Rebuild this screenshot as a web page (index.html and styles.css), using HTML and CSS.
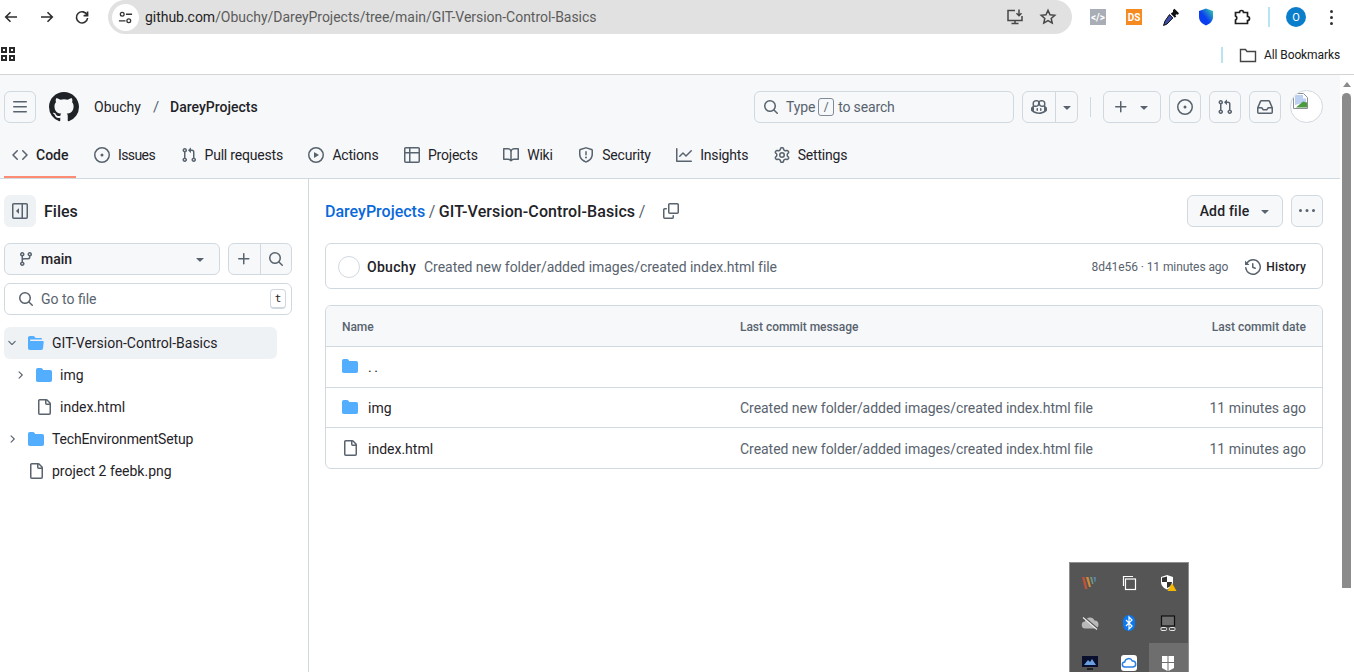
FILE: index.html
```html
<!DOCTYPE html>
<html lang="en">
<head>
<meta charset="utf-8">
<title>DareyProjects/GIT-Version-Control-Basics</title>
<link rel="stylesheet" href="styles.css">
</head>
<body>
<svg class="sprite" width="0" height="0" aria-hidden="true">
  <defs>
    <linearGradient id="shield-grad" x1="0" y1="1" x2="1" y2="0"><stop offset="0.45" stop-color="#0a3ff0"/><stop offset="1" stop-color="#35d6a6"/></linearGradient>
    <symbol id="bars" viewBox="0 0 16 16"><path d="M1 2.75A.75.75 0 0 1 1.75 2h12.5a.75.75 0 0 1 0 1.5H1.75A.75.75 0 0 1 1 2.75Zm0 5A.75.75 0 0 1 1.75 7h12.5a.75.75 0 0 1 0 1.5H1.75A.75.75 0 0 1 1 7.75ZM1.75 12h12.5a.75.75 0 0 1 0 1.5H1.75a.75.75 0 0 1 0-1.5Z"/></symbol>
    <symbol id="mark" viewBox="0 0 16 16"><path d="M8 0c4.42 0 8 3.58 8 8a8.013 8.013 0 0 1-5.45 7.59c-.4.08-.55-.17-.55-.38 0-.27.01-1.13.01-2.2 0-.75-.25-1.23-.54-1.48 1.78-.2 3.65-.88 3.65-3.95 0-.88-.31-1.59-.82-2.15.08-.2.36-1.02-.08-2.12 0 0-.67-.22-2.2.82-.64-.18-1.32-.27-2-.27-.68 0-1.36.09-2 .27-1.53-1.03-2.2-.82-2.2-.82-.44 1.1-.16 1.92-.08 2.12-.51.56-.82 1.28-.82 2.15 0 3.06 1.86 3.75 3.64 3.95-.23.2-.44.55-.51 1.07-.46.21-1.61.55-2.33-.66-.15-.24-.6-.83-1.23-.82-.67.01-.27.38.01.53.34.19.73.9.82 1.13.16.45.68 1.31 2.69.94 0 .67.01 1.3.01 1.49 0 .21-.15.45-.55.38A7.995 7.995 0 0 1 0 8c0-4.42 3.58-8 8-8Z"/></symbol>
    <symbol id="code" viewBox="0 0 16 16"><path d="m11.28 3.22 4.25 4.25a.75.75 0 0 1 0 1.06l-4.25 4.25a.749.749 0 0 1-1.275-.326.749.749 0 0 1 .215-.734L13.94 8l-3.72-3.72a.749.749 0 0 1 .326-1.275.749.749 0 0 1 .734.215Zm-6.56 0a.751.751 0 0 1 1.042.018.751.751 0 0 1 .018 1.042L2.06 8l3.72 3.72a.749.749 0 0 1-.326 1.275.749.749 0 0 1-.734-.215L.47 8.53a.75.75 0 0 1 0-1.06Z"/></symbol>
    <symbol id="issue" viewBox="0 0 16 16"><path d="M8 9.5a1.5 1.5 0 1 0 0-3 1.5 1.5 0 0 0 0 3Z"/><path d="M8 0a8 8 0 1 1 0 16A8 8 0 0 1 8 0ZM1.5 8a6.5 6.5 0 1 0 13 0 6.5 6.5 0 0 0-13 0Z"/></symbol>
    <symbol id="pr" viewBox="0 0 16 16"><path d="M1.5 3.25a2.25 2.25 0 1 1 3 2.122v5.256a2.251 2.251 0 1 1-1.5 0V5.372A2.25 2.25 0 0 1 1.5 3.25Zm5.677-.177L9.573.677A.25.25 0 0 1 10 .854V2.5h1A2.5 2.5 0 0 1 13.5 5v5.628a2.251 2.251 0 1 1-1.5 0V5a1 1 0 0 0-1-1h-1v1.646a.25.25 0 0 1-.427.177L7.177 3.427a.25.25 0 0 1 0-.354ZM3.75 2.5a.75.75 0 1 0 0 1.5.75.75 0 0 0 0-1.5Zm0 9.5a.75.75 0 1 0 0 1.5.75.75 0 0 0 0-1.5Zm8.25.75a.75.75 0 1 0 1.5 0 .75.75 0 0 0-1.5 0Z"/></symbol>
    <symbol id="play" viewBox="0 0 16 16"><path d="M8 0a8 8 0 1 1 0 16A8 8 0 0 1 8 0ZM1.5 8a6.5 6.5 0 1 0 13 0 6.5 6.5 0 0 0-13 0Zm4.879-2.773 4.264 2.559a.25.25 0 0 1 0 .428l-4.264 2.559A.25.25 0 0 1 6 10.559V5.442a.25.25 0 0 1 .379-.215Z"/></symbol>
    <symbol id="table" viewBox="0 0 16 16"><path d="M0 1.75C0 .784.784 0 1.75 0h12.5C15.216 0 16 .784 16 1.75v12.5A1.75 1.75 0 0 1 14.25 16H1.75A1.75 1.75 0 0 1 0 14.25ZM6.5 6.5v8h7.75a.25.25 0 0 0 .25-.25V6.5Zm8-1.5V1.75a.25.25 0 0 0-.25-.25H6.5V5Zm-13 1.5v7.75c0 .138.112.25.25.25H5v-8ZM5 5V1.5H1.75a.25.25 0 0 0-.25.25V5Z"/></symbol>
    <symbol id="book" viewBox="0 0 16 16"><path d="M0 1.75A.75.75 0 0 1 .75 1h4.253c1.227 0 2.317.59 3 1.501A3.743 3.743 0 0 1 11.006 1h4.245a.75.75 0 0 1 .75.75v10.5a.75.75 0 0 1-.75.75h-4.507a2.25 2.25 0 0 0-1.591.659l-.622.621a.75.75 0 0 1-1.06 0l-.622-.621A2.25 2.25 0 0 0 5.258 13H.75a.75.75 0 0 1-.75-.75Zm7.251 10.324.004-5.073-.002-2.253A2.25 2.25 0 0 0 5.003 2.5H1.5v9h3.757a3.75 3.75 0 0 1 1.994.574ZM8.755 4.75l-.004 7.322a3.752 3.752 0 0 1 1.992-.572H14.5v-9h-3.495a2.25 2.25 0 0 0-2.25 2.25Z"/></symbol>
    <symbol id="shield" viewBox="0 0 16 16"><path d="M7.467.133a1.748 1.748 0 0 1 1.066 0l5.25 1.68A1.75 1.75 0 0 1 15 3.48V7c0 1.566-.32 3.182-1.303 4.682-.983 1.498-2.585 2.813-5.032 3.855a1.697 1.697 0 0 1-1.33 0c-2.447-1.042-4.049-2.357-5.032-3.855C1.32 10.182 1 8.566 1 7V3.48a1.75 1.75 0 0 1 1.217-1.667Zm.61 1.429a.25.25 0 0 0-.153 0l-5.25 1.68a.25.25 0 0 0-.174.238V7c0 1.358.275 2.666 1.057 3.86.784 1.194 2.121 2.34 4.366 3.297a.196.196 0 0 0 .154 0c2.245-.956 3.582-2.104 4.366-3.298C13.225 9.666 13.5 8.36 13.5 7V3.48a.251.251 0 0 0-.174-.237l-5.25-1.68ZM8.75 4.75v3a.75.75 0 0 1-1.5 0v-3a.75.75 0 0 1 1.5 0ZM9 10.5a1 1 0 1 1-2 0 1 1 0 0 1 2 0Z"/></symbol>
    <symbol id="graph" viewBox="0 0 16 16"><path d="M1.5 1.75V13.5h13.75a.75.75 0 0 1 0 1.5H.75a.75.75 0 0 1-.75-.75V1.75a.75.75 0 0 1 1.5 0Zm14.28 2.53-5.25 5.25a.75.75 0 0 1-1.06 0L7 7.06 4.28 9.78a.751.751 0 0 1-1.042-.018.751.751 0 0 1-.018-1.042l3.25-3.25a.75.75 0 0 1 1.06 0L10 7.94l4.72-4.72a.751.751 0 0 1 1.042.018.751.751 0 0 1 .018 1.042Z"/></symbol>
    <symbol id="gear" viewBox="0 0 16 16"><path d="M8 0a8.2 8.2 0 0 1 .701.031C9.444.095 9.99.645 10.16 1.29l.288 1.107c.018.066.079.158.212.224.231.114.454.243.668.386.123.082.233.09.299.071l1.103-.303c.644-.176 1.392.021 1.82.63.27.385.506.792.704 1.218.315.675.111 1.422-.364 1.891l-.814.806c-.049.048-.098.147-.088.294.016.257.016.515 0 .772-.01.147.038.246.088.294l.814.806c.475.469.679 1.216.364 1.891a7.977 7.977 0 0 1-.704 1.217c-.428.61-1.176.807-1.82.63l-1.102-.302c-.067-.019-.177-.011-.3.071a5.909 5.909 0 0 1-.668.386c-.133.066-.194.158-.211.224l-.29 1.106c-.168.646-.715 1.196-1.458 1.26a8.006 8.006 0 0 1-1.402 0c-.743-.064-1.289-.614-1.458-1.26l-.289-1.106c-.018-.066-.079-.158-.212-.224a5.738 5.738 0 0 1-.668-.386c-.123-.082-.233-.09-.299-.071l-1.103.303c-.644.176-1.392-.021-1.82-.63a8.12 8.12 0 0 1-.704-1.218c-.315-.675-.111-1.422.363-1.891l.815-.806c.05-.048.098-.147.088-.294a6.214 6.214 0 0 1 0-.772c.01-.147-.038-.246-.088-.294l-.815-.806C.635 6.045.431 5.298.746 4.623a7.92 7.92 0 0 1 .704-1.217c.428-.61 1.176-.807 1.82-.63l1.102.302c.067.019.177.011.3-.071.214-.143.437-.272.668-.386.133-.066.194-.158.211-.224l.29-1.106C6.009.645 6.556.095 7.299.03 7.53.01 7.764 0 8 0Zm-.571 1.525c-.036.003-.108.036-.137.146l-.289 1.105c-.147.561-.549.967-.998 1.189-.173.086-.34.183-.5.29-.417.278-.97.423-1.529.27l-1.103-.303c-.109-.03-.175.016-.195.045-.22.312-.412.644-.573.99-.014.031-.021.11.059.19l.815.806c.411.406.562.957.53 1.456a4.709 4.709 0 0 0 0 .582c.032.499-.119 1.05-.53 1.456l-.815.806c-.081.08-.073.159-.059.19.162.346.353.677.573.989.02.03.085.076.195.046l1.102-.303c.56-.153 1.113-.008 1.53.27.161.107.328.204.501.29.447.222.85.629.997 1.189l.289 1.105c.029.109.101.143.137.146a6.6 6.6 0 0 0 1.142 0c.036-.003.108-.036.137-.146l.289-1.105c.147-.561.549-.967.998-1.189.173-.086.34-.183.5-.29.417-.278.97-.423 1.529-.27l1.103.303c.109.029.175-.016.195-.045.22-.313.411-.644.573-.99.014-.031.021-.11-.059-.19l-.815-.806c-.411-.406-.562-.957-.53-1.456a4.709 4.709 0 0 0 0-.582c-.032-.499.119-1.05.53-1.456l.815-.806c.081-.08.073-.159.059-.19a6.464 6.464 0 0 0-.573-.989c-.02-.03-.085-.076-.195-.046l-1.102.303c-.56.153-1.113.008-1.53-.27a4.44 4.44 0 0 0-.501-.29c-.447-.222-.85-.629-.997-1.189l-.289-1.105c-.029-.11-.101-.143-.137-.146a6.6 6.6 0 0 0-1.142 0ZM11 8a3 3 0 1 1-6 0 3 3 0 0 1 6 0ZM9.5 8a1.5 1.5 0 1 0-3.001.001A1.5 1.5 0 0 0 9.5 8Z"/></symbol>
    <symbol id="search" viewBox="0 0 16 16"><path d="M10.68 11.74a6 6 0 0 1-7.922-8.982 6 6 0 0 1 8.982 7.922l3.04 3.04a.749.749 0 0 1-.326 1.275.749.749 0 0 1-.734-.215ZM11.5 7a4.499 4.499 0 1 0-8.997 0A4.499 4.499 0 0 0 11.5 7Z"/></symbol>
    <symbol id="plus" viewBox="0 0 16 16"><path d="M7.75 2a.75.75 0 0 1 .75.75V7h4.25a.75.75 0 0 1 0 1.5H8.5v4.25a.75.75 0 0 1-1.5 0V8.5H2.75a.75.75 0 0 1 0-1.5H7V2.75A.75.75 0 0 1 7.75 2Z"/></symbol>
    <symbol id="inbox" viewBox="0 0 16 16"><path d="M2.8 2.06A1.75 1.75 0 0 1 4.41 1h7.18c.7 0 1.333.417 1.61 1.06l2.74 6.395c.04.093.06.194.06.295v4.5A1.75 1.75 0 0 1 14.25 15H1.75A1.75 1.75 0 0 1 0 13.25v-4.5c0-.101.02-.202.06-.295Zm1.61.44a.25.25 0 0 0-.23.152L1.887 8H4.75a.75.75 0 0 1 .6.3L6.625 10h2.75l1.275-1.7a.75.75 0 0 1 .6-.3h2.863L11.82 2.652a.25.25 0 0 0-.23-.152Zm10.09 7h-2.875l-1.275 1.7a.75.75 0 0 1-.6.3h-3.5a.75.75 0 0 1-.6-.3L4.375 9.5H1.5v3.75c0 .138.112.25.25.25h12.5a.25.25 0 0 0 .25-.25Z"/></symbol>
    <symbol id="copilot" viewBox="0 0 16 16"><path d="M7.998 15.035c-4.562 0-7.873-2.914-7.998-3.749V9.338c.085-.628.677-1.686 1.588-2.065.013-.07.024-.143.036-.218.029-.183.06-.384.126-.612-.201-.508-.254-1.084-.254-1.656 0-.87.128-1.769.693-2.484.579-.733 1.494-1.124 2.724-1.261 1.206-.134 2.262.034 2.944.765.05.053.096.108.139.165.044-.057.094-.112.143-.165.682-.731 1.738-.899 2.944-.765 1.23.137 2.145.528 2.724 1.261.566.715.693 1.614.693 2.484 0 .572-.053 1.148-.254 1.656.066.228.098.429.126.612.012.076.024.148.037.218.924.385 1.522 1.471 1.591 2.095v1.872c0 .766-3.351 3.795-8.002 3.795Zm0-1.485c2.28 0 4.584-1.11 5.002-1.433V7.862l-.023-.116c-.49.21-1.075.291-1.727.291-1.146 0-2.059-.327-2.71-.991A3.222 3.222 0 0 1 8 6.303a3.24 3.24 0 0 1-.544.743c-.65.664-1.563.991-2.71.991-.652 0-1.236-.081-1.727-.291l-.023.116v4.255c.419.323 2.722 1.433 5.002 1.433ZM6.762 2.83c-.193-.206-.637-.413-1.682-.297-1.019.113-1.479.404-1.713.7-.247.312-.369.789-.369 1.554 0 .793.129 1.171.308 1.371.162.181.519.379 1.442.379.853 0 1.339-.235 1.638-.54.315-.322.527-.827.617-1.553.117-.935-.037-1.395-.241-1.614Zm4.155-.297c-1.044-.116-1.488.091-1.681.297-.204.219-.359.679-.242 1.614.091.726.303 1.231.618 1.553.299.305.784.54 1.638.54.922 0 1.28-.198 1.442-.379.179-.2.308-.578.308-1.371 0-.765-.123-1.242-.37-1.554-.233-.296-.693-.587-1.713-.7Z"/><path d="M6.25 9.037a.75.75 0 0 1 .75.75v1.501a.75.75 0 0 1-1.5 0V9.787a.75.75 0 0 1 .75-.75Zm4.25.75v1.501a.75.75 0 0 1-1.5 0V9.787a.75.75 0 0 1 1.5 0Z"/></symbol>
    <symbol id="branch" viewBox="0 0 16 16"><path d="M9.5 3.25a2.25 2.25 0 1 1 3 2.122V6A2.5 2.5 0 0 1 10 8.5H6a1 1 0 0 0-1 1v1.128a2.251 2.251 0 1 1-1.5 0V5.372a2.25 2.25 0 1 1 1.5 0v1.836A2.493 2.493 0 0 1 6 7h4a1 1 0 0 0 1-1v-.628A2.25 2.25 0 0 1 9.5 3.25Zm-6 0a.75.75 0 1 0 1.5 0 .75.75 0 0 0-1.5 0Zm8.25-.75a.75.75 0 1 0 0 1.5.75.75 0 0 0 0-1.5ZM4.25 12a.75.75 0 1 0 0 1.5.75.75 0 0 0 0-1.5Z"/></symbol>
    <symbol id="file" viewBox="0 0 16 16"><path d="M2 1.75C2 .784 2.784 0 3.75 0h6.586c.464 0 .909.184 1.237.513l2.914 2.914c.329.328.513.773.513 1.237v9.586A1.75 1.75 0 0 1 13.25 16h-9.5A1.75 1.75 0 0 1 2 14.25Zm1.75-.25a.25.25 0 0 0-.25.25v12.5c0 .138.112.25.25.25h9.5a.25.25 0 0 0 .25-.25V6h-2.75A1.75 1.75 0 0 1 9 4.25V1.5Zm6.75.062V4.25c0 .138.112.25.25.25h2.688l-.011-.013-2.914-2.914-.013-.011Z"/></symbol>
    <symbol id="folder" viewBox="0 0 16 16"><path d="M1.75 1A1.75 1.75 0 0 0 0 2.75v10.5C0 14.216.784 15 1.75 15h12.5A1.75 1.75 0 0 0 16 13.25v-8.5A1.75 1.75 0 0 0 14.25 3H7.5a.25.25 0 0 1-.2-.1l-.9-1.2C6.07 1.26 5.55 1 5 1H1.75Z"/></symbol>
    <symbol id="folder-open" viewBox="0 0 16 16"><path d="M.513 1.513A1.75 1.75 0 0 1 1.75 1h3.5c.55 0 1.07.26 1.4.7l.9 1.2a.25.25 0 0 0 .2.1H13a1 1 0 0 1 1 1v.5H2.75a.75.75 0 0 0 0 1.5h11.978a1 1 0 0 1 .994 1.117L15 13.25A1.75 1.75 0 0 1 13.25 15H1.75A1.75 1.75 0 0 1 0 13.25V2.75c0-.464.184-.91.513-1.237Z"/></symbol>
    <symbol id="chev-down" viewBox="0 0 16 16"><path d="M12.78 5.22a.749.749 0 0 1 0 1.06l-4.25 4.25a.749.749 0 0 1-1.06 0L3.22 6.28a.749.749 0 1 1 1.06-1.06L8 8.939l3.72-3.719a.749.749 0 0 1 1.06 0Z"/></symbol>
    <symbol id="chev-right" viewBox="0 0 16 16"><path d="M6.22 3.22a.75.75 0 0 1 1.06 0l4.25 4.25a.75.75 0 0 1 0 1.06l-4.25 4.25a.751.751 0 0 1-1.042-.018.751.751 0 0 1-.018-1.042L9.94 8 6.22 4.28a.75.75 0 0 1 0-1.06Z"/></symbol>
    <symbol id="caret" viewBox="0 0 16 16"><path d="m4.427 7.427 3.396 3.396a.25.25 0 0 0 .354 0l3.396-3.396A.25.25 0 0 0 11.396 7H4.604a.25.25 0 0 0-.177.427Z"/></symbol>
    <symbol id="copy" viewBox="0 0 16 16"><path d="M0 6.75C0 5.784.784 5 1.75 5h1.5a.75.75 0 0 1 0 1.5h-1.5a.25.25 0 0 0-.25.25v7.5c0 .138.112.25.25.25h7.5a.25.25 0 0 0 .25-.25v-1.5a.75.75 0 0 1 1.5 0v1.5A1.75 1.75 0 0 1 9.25 16h-7.5A1.75 1.75 0 0 1 0 14.25Z"/><path d="M5 1.75C5 .784 5.784 0 6.75 0h7.5C15.216 0 16 .784 16 1.75v7.5A1.75 1.75 0 0 1 14.25 11h-7.5A1.75 1.75 0 0 1 5 9.25Zm1.75-.25a.25.25 0 0 0-.25.25v7.5c0 .138.112.25.25.25h7.5a.25.25 0 0 0 .25-.25v-7.5a.25.25 0 0 0-.25-.25Z"/></symbol>
    <symbol id="history" viewBox="0 0 16 16"><path d="m.427 1.927 1.215 1.215a8.002 8.002 0 1 1-1.6 5.685.75.75 0 1 1 1.493-.154 6.5 6.5 0 1 0 1.18-4.458l1.358 1.358A.25.25 0 0 1 3.896 6H.25A.25.25 0 0 1 0 5.75V2.104a.25.25 0 0 1 .427-.177ZM7.75 4a.75.75 0 0 1 .75.75v2.992l2.028.812a.75.75 0 0 1-.557 1.392l-2.5-1A.751.751 0 0 1 7 8.25v-3.5A.75.75 0 0 1 7.75 4Z"/></symbol>
    <symbol id="kebab" viewBox="0 0 16 16"><path d="M8 9a1.5 1.5 0 1 0 0-3 1.5 1.5 0 0 0 0 3ZM1.5 9a1.5 1.5 0 1 0 0-3 1.5 1.5 0 0 0 0 3Zm13 0a1.5 1.5 0 1 0 0-3 1.5 1.5 0 0 0 0 3Z"/></symbol>
    <symbol id="sidebar" viewBox="0 0 16 16"><path d="M7 5.604v4.792a.25.25 0 0 1-.427.177L4.177 8.177a.25.25 0 0 1 0-.354l2.396-2.396A.25.25 0 0 1 7 5.604Z"/><path d="M1.75 0h12.5C15.216 0 16 .784 16 1.75v12.5A1.75 1.75 0 0 1 14.25 16H1.75A1.75 1.75 0 0 1 0 14.25V1.75C0 .784.784 0 1.75 0ZM1.500 1.75v12.5c0 .138.112.25.25.25H9.5v-13H1.75a.25.25 0 0 0-.25.25ZM11 14.5h3.25a.25.25 0 0 0 .25-.25V1.75a.25.25 0 0 0-.25-.25H11Z"/></symbol>
  </defs>
</svg>

<header class="chrome">
  <div class="toolbar">
    <div class="nav-icons">
      <svg class="ci" viewBox="0 0 16 16"><path d="M14 8H3M7.5 3.2 2.7 8l4.8 4.8"/></svg>
      <svg class="ci" viewBox="0 0 16 16"><path d="M2 8h11M8.500 3.200 13.300 8l-4.800 4.800"/></svg>
      <svg class="ci" viewBox="0 0 16 16"><path d="M13.200 6.200A5.600 5.600 0 1 0 13.600 9M13.600 2.600v4h-4"/></svg>
    </div>
    <div class="omnibox">
      <span class="tune"><svg class="ci-small" viewBox="0 0 16 16"><circle cx="4.500" cy="4.500" r="2"/><path d="M8.500 4.500H15M1 11.500h7"/><circle cx="11.500" cy="11.500" r="2"/></svg></span>
      <span class="url"><span class="url-host">github.com</span>/Obuchy/DareyProjects/tree/main/GIT-Version-Control-Basics</span>
      <span class="omni-end">
        <svg class="ci-omni" viewBox="0 0 18 18"><path d="M9 2.500H2v10h14V8M5.500 15.500h7M9 12.500v3M13 1.500v6M10.500 5.200 13 7.700l2.500-2.500"/></svg>
        <svg class="ci-omni" viewBox="0 0 18 18"><path d="m9 2.300 2 4.400 4.800.5-3.600 3.200 1 4.700L9 12.700l-4.200 2.400 1-4.700-3.600-3.200 4.800-.5Z"/></svg>
      </span>
    </div>
    <div class="extensions">
      <span class="ext ext-code">&lt;/&gt;</span>
      <span class="ext ext-ds">DS</span>
      <svg class="ext-svg ext-drop" viewBox="0 0 18 18"><path class="drop-dark" d="m11 2 1.500-1.200 4.500 4.500-1.200 1.500-1.500-.5-1 1 1 1-1.500 1.500-4-4L9.500 5l1.500-1Z"/><path class="drop-blue" d="M7.500 6.500 10.800 10 5 16l-3.500 1.500L3 13Z"/></svg>
      <svg class="ext-svg ext-shield" viewBox="0 0 18 18"><path class="shield-fill" d="M9 .5 2 3v6c0 4 3.200 7 7 8.500 3.800-1.500 7-4.500 7-8.500V3Z"/></svg>
      <svg class="ci ext-puzzle" viewBox="0 0 18 18"><path d="M2.500 4.500h4a2 2 0 0 1 4 0h4v4a2 2 0 0 1 0 4v3h-12v-3.500a2.200 2.200 0 0 0 0-4Z"/></svg>
      <span class="tool-sep"></span>
      <span class="profile">O</span>
      <span class="menu-dots"><i></i><i></i><i></i></span>
    </div>
  </div>
  <div class="bookmarks">
    <span class="apps"><i></i><i></i><i></i><i></i></span>
    <span class="book-sep"></span>
    <svg class="book-folder" viewBox="0 0 18 16"><path d="M1.500 2.500h5l1.500 2h8.500v10h-15Z"/></svg>
    <span class="book-label">All Bookmarks</span>
  </div>
</header>

<div class="viewport">
  <div class="page">
    <div class="gh-header">
      <div class="gh-top">
        <button class="btn icon-btn"><svg class="oct"><use href="#bars"/></svg></button>
        <svg class="gh-logo"><use href="#mark"/></svg>
        <span class="crumb-owner">Obuchy</span>
        <span class="crumb-slash">/</span>
        <span class="crumb-repo">DareyProjects</span>
        <div class="gh-actions">
          <div class="gh-search">
            <svg class="oct"><use href="#search"/></svg>
            <span>Type</span><kbd class="slash-key">/</kbd><span>to search</span>
          </div>
          <div class="btn-group copilot">
            <span class="seg seg-copilot"><svg class="oct"><use href="#copilot"/></svg></span>
            <span class="seg seg-caret"><svg class="oct"><use href="#caret"/></svg></span>
          </div>
          <span class="vsep"></span>
          <button class="btn plus-btn"><svg class="oct"><use href="#plus"/></svg><svg class="oct"><use href="#caret"/></svg></button>
          <button class="btn icon-btn"><svg class="oct"><use href="#issue"/></svg></button>
          <button class="btn icon-btn"><svg class="oct"><use href="#pr"/></svg></button>
          <button class="btn icon-btn"><svg class="oct"><use href="#inbox"/></svg></button>
          <span class="avatar-btn">
            <svg class="broken" viewBox="0 0 16 16"><path class="br-page" d="M.5.5h10l4 4v11H.5Z"/><path class="br-sky" d="M2 2h8v3.500h3V9L2 12Z"/><path class="br-hill" d="M3 14.500 10 8.500l4 1v5Z"/></svg>
          </span>
        </div>
      </div>
      <nav class="tabs">
        <a class="tab tab-active"><svg class="oct"><use href="#code"/></svg>Code</a>
        <a class="tab tab-issues"><svg class="oct"><use href="#issue"/></svg>Issues</a>
        <a class="tab"><svg class="oct"><use href="#pr"/></svg>Pull requests</a>
        <a class="tab"><svg class="oct"><use href="#play"/></svg>Actions</a>
        <a class="tab"><svg class="oct"><use href="#table"/></svg>Projects</a>
        <a class="tab"><svg class="oct"><use href="#book"/></svg>Wiki</a>
        <a class="tab"><svg class="oct"><use href="#shield"/></svg>Security</a>
        <a class="tab"><svg class="oct"><use href="#graph"/></svg>Insights</a>
        <a class="tab"><svg class="oct"><use href="#gear"/></svg>Settings</a>
      </nav>
    </div>

    <div class="repo">
      <aside class="side">
        <div class="side-head">
          <span class="side-toggle"><svg class="oct"><use href="#sidebar"/></svg></span>
          <strong class="side-title">Files</strong>
        </div>
        <div class="branch-row">
          <button class="btn branch"><svg class="oct"><use href="#branch"/></svg><span class="branch-name">main</span><svg class="oct branch-caret"><use href="#caret"/></svg></button>
          <div class="btn-group side-tools">
            <span class="seg"><svg class="oct"><use href="#plus"/></svg></span>
            <span class="seg"><svg class="oct"><use href="#search"/></svg></span>
          </div>
        </div>
        <div class="go-file">
          <svg class="oct"><use href="#search"/></svg>
          <span class="go-label">Go to file</span>
          <kbd class="t-key">t</kbd>
        </div>
        <ul class="tree">
          <li class="node node-current"><svg class="oct chev"><use href="#chev-down"/></svg><svg class="oct dir"><use href="#folder-open"/></svg>GIT-Version-Control-Basics</li>
          <li class="node depth-2"><svg class="oct chev"><use href="#chev-right"/></svg><svg class="oct dir"><use href="#folder"/></svg>img</li>
          <li class="node depth-2"><span class="chev-gap"></span><svg class="oct"><use href="#file"/></svg>index.html</li>
          <li class="node"><svg class="oct chev"><use href="#chev-right"/></svg><svg class="oct dir"><use href="#folder"/></svg><span class="node-tight">TechEnvironmentSetup</span></li>
          <li class="node"><span class="chev-gap"></span><svg class="oct"><use href="#file"/></svg>project 2 feebk.png</li>
        </ul>
      </aside>

      <main class="content">
        <div class="path-row">
          <div class="path"><a class="path-link">DareyProjects</a><span class="path-sep">/</span><strong class="path-cur">GIT-Version-Control-Basics</strong><span class="path-sep">/</span></div>
          <svg class="oct path-copy"><use href="#copy"/></svg>
          <button class="btn add-file">Add file<svg class="oct"><use href="#caret"/></svg></button>
          <button class="btn icon-btn"><svg class="oct"><use href="#kebab"/></svg></button>
        </div>

        <div class="commit">
          <span class="commit-avatar"></span>
          <strong class="commit-author">Obuchy</strong>
          <span class="commit-msg">Created new folder/added images/created index.html file</span>
          <span class="commit-meta">8d41e56 · 11 minutes ago</span>
          <span class="history"><svg class="oct"><use href="#history"/></svg>History</span>
        </div>

        <div class="files">
          <div class="row row-head"><span class="c-name">Name</span><span class="c-msg">Last commit message</span><span class="c-date">Last commit date</span></div>
          <div class="row"><span class="c-name"><svg class="oct dir"><use href="#folder"/></svg><span class="dots">..</span></span></div>
          <div class="row"><span class="c-name"><svg class="oct dir"><use href="#folder"/></svg>img</span><span class="c-msg">Created new folder/added images/created index.html file</span><span class="c-date">11 minutes ago</span></div>
          <div class="row"><span class="c-name"><svg class="oct"><use href="#file"/></svg>index.html</span><span class="c-msg">Created new folder/added images/created index.html file</span><span class="c-date">11 minutes ago</span></div>
        </div>
      </main>
    </div>
  </div>

  <div class="scrollbar">
    <span class="scroll-up"></span>
    <span class="scroll-thumb"></span>
  </div>
</div>

<div class="tray">
  <span class="tray-cell"><svg viewBox="0 0 18 18" class="tray-ic"><path class="t-red" d="M1 3h2.500l3 12H4Z"/><path class="t-orange" d="M5 3h2.500l2.500 10H8Z"/><path class="t-green" d="M9 3h2l1.500 7h-1.500Z"/><path class="t-blue" d="M12.500 3H15l-.5 5h-1Z"/></svg></span>
  <span class="tray-cell"><svg viewBox="0 0 18 18" class="tray-ic tray-line"><path d="M3.500 12V2.500H13"/><rect x="5.500" y="5" width="10" height="10.500"/></svg></span>
  <span class="tray-cell"><svg viewBox="0 0 18 18" class="tray-ic"><path class="t-white" d="M8 1 2 3v5c0 3.500 2.500 6 6 7.500 3.500-1.500 6-4 6-7.500V3Z"/><path class="t-dark" d="M8 2.500V8H3V3.800ZM8 8h5c0 3-2 4.800-5 6Z"/><path class="t-amber" d="m13 9 4.500 8h-9Z"/></svg></span>
  <span class="tray-cell"><svg viewBox="0 0 18 18" class="tray-ic"><path class="t-cloud" d="M4.500 14.500a3.500 3.500 0 0 1-.5-7 5 5 0 0 1 9.500-1 4 4 0 0 1 0 8Z"/><path class="t-strike-shadow" d="M2.800 2.900 16.800 14.900"/><path class="t-strike" d="M2 3.500 16 15.500"/></svg></span>
  <span class="tray-cell"><svg viewBox="0 0 18 18" class="tray-ic"><rect class="t-bt" x="3" y="1" width="12" height="16" rx="6"/><path class="t-btline" d="m6 6 6 6-3 3V3l3 3-6 6"/></svg></span>
  <span class="tray-cell"><svg viewBox="0 0 18 18" class="tray-ic"><rect class="t-screen" x="2.500" y="2" width="13" height="10"/><rect class="t-foot" x="2" y="13.500" width="5.500" height="3" rx="1"/><rect class="t-foot" x="10.500" y="13.500" width="5.500" height="3" rx="1"/></svg></span>
  <span class="tray-cell"><svg viewBox="0 0 18 18" class="tray-ic"><rect class="t-mon" x="1" y="2" width="16" height="11"/><path class="t-monb" d="m3 11 4-5 2 2 2-3 4 6Z"/><path class="t-monf" d="M6 15h6"/></svg></span>
  <span class="tray-cell"><svg viewBox="0 0 18 18" class="tray-ic"><rect class="t-white" x="1" y="1" width="16" height="16" rx="3"/><path class="t-cloudline" d="M5 13a2.500 2.500 0 0 1-.3-5 4 4 0 0 1 7.600-1A3 3 0 0 1 13 13Z"/></svg></span>
  <span class="tray-cell tray-hover"><svg viewBox="0 0 18 18" class="tray-ic"><path class="t-white" d="M3 2h5.500v6H3ZM9.500 2H15v6H9.500ZM3 9h5.500v8L3 14ZM9.500 9H15v5l-5.500 3Z"/></svg></span>
</div>
</body>
</html>
```

FILE: styles.css
```css
* { box-sizing: border-box; }
html, body { margin: 0; height: 100%; overflow: hidden; }
body {
  font-family: Roboto, "Liberation Sans", sans-serif;
  font-size: 14px;
  color: #1f2328;
  background: #fff;
  position: relative;
  display: flex;
  flex-direction: column;
}
.sprite { position: absolute; }
ul { list-style: none; margin: 0; padding: 0; }
button { font: inherit; color: inherit; }
kbd { font: inherit; }
.oct { width: 16px; height: 16px; fill: #59636e; flex: none; display: block; }

/* browser chrome */
.chrome { flex: none; background: #fff; border-bottom: 1px solid #d4d4d4; height: 75px; }
.toolbar { display: flex; height: 36px; }
.nav-icons { display: flex; align-items: center; gap: 19.5px; width: 108px; padding: 0 0 3px 3px; }
.ci { width: 16px; height: 16px; fill: none; stroke: #2e2e2e; stroke-width: 1.6; flex: none; }
.omnibox { width: 964px; height: 34px; background: #e1e1e1; border-radius: 17px; display: flex; align-items: center; padding: 0 15px 0 4px; }
.tune { width: 27px; height: 27px; background: #fff; border-radius: 50%; display: flex; align-items: center; justify-content: center; }
.ci-small { width: 15px; height: 15px; fill: none; stroke: #333; stroke-width: 1.4; }
.url { margin-left: 6px; font-size: 14px; color: #5c5c5c; white-space: nowrap; letter-spacing: -0.03px; }
.url-host { color: #1f1f1f; }
.omni-end { margin-left: auto; display: flex; align-items: center; gap: 15px; }
.ci-omni { width: 18px; height: 18px; fill: none; stroke: #474747; stroke-width: 1.5; display: block; }
.extensions { flex: 1; display: flex; align-items: center; padding: 0 0 2px 18px; }
.ext { width: 16px; height: 16px; display: flex; align-items: center; justify-content: center; font-size: 10px; font-weight: 700; color: #fff; flex: none; }
.ext-code { background: #a9adb6; }
.ext-ds { background: #f58a20; margin-left: 20px; }
.ext-svg { width: 18px; height: 18px; flex: none; }
.ext-drop { margin-left: 20px; }
.ext-shield { margin-left: 17px; }
.drop-dark { fill: #111; }
.drop-blue { fill: #3a4ca8; stroke: #111; stroke-width: 1; }
.shield-fill { fill: url(#shield-grad); }
.ext-puzzle { width: 18px; height: 18px; margin-left: 18px; stroke: #1f1f1f; stroke-width: 1.7; }
.tool-sep { width: 2px; height: 20px; background: #b9e4f1; margin-left: 17px; flex: none; }
.profile { width: 20px; height: 20px; margin-left: 16px; border-radius: 50%; background: #0a7dcb; color: #fff; font-size: 11px; display: flex; align-items: center; justify-content: center; flex: none; }
.menu-dots { margin-left: 24px; display: flex; flex-direction: column; gap: 3px; }
.menu-dots i { width: 3px; height: 3px; border-radius: 50%; background: #333; display: block; }

.bookmarks { height: 38px; display: flex; align-items: center; padding: 0 14px 0 1px; }
.apps { display: grid; grid-template-columns: 6px 6px; gap: 2px; margin-top: -2px; }
.apps i { width: 6px; height: 6px; border: 2px solid #2a2a2a; display: block; }
.book-sep { width: 2px; height: 16px; background: #b9e4f1; margin-left: auto; }
.book-folder { width: 18px; height: 16px; margin-left: 16px; fill: none; stroke: #444; stroke-width: 1.4; }
.book-label { font-size: 12px; margin-left: 7px; color: #202020; letter-spacing: -0.1px; }

/* viewport */
.viewport { flex: 1; display: flex; min-height: 0; }
.page { flex: 1; min-width: 0; display: flex; flex-direction: column; }
.scrollbar { width: 14px; flex: none; padding: 7px 3px 0 2px; display: flex; flex-direction: column; align-items: center; background: #fff; }
.scroll-up { width: 0; height: 0; border: 4.5px solid transparent; border-top: 0; border-bottom: 5px solid #8b8b8b; }
.scroll-thumb { width: 9px; height: 495px; margin-top: 6px; background: #8b8b8b; border-radius: 5px 5px 0 0; }

/* GitHub header */
.gh-header { flex: none; background: #f6f8fa; border-bottom: 1px solid #d1d9e0; height: 104px; padding-top: 16px; }
.gh-top { display: flex; align-items: center; height: 32px; padding: 0 17px 0 4px; }
.btn { height: 32px; background: #f6f8fa; border: 1px solid #d1d9e0; border-radius: 6px; padding: 0; display: flex; align-items: center; justify-content: center; flex: none; }
.icon-btn { width: 32px; }
.gh-logo { width: 30px; height: 30px; margin-left: 13px; fill: #1f2328; flex: none; }
.crumb-owner { margin-left: 15px; color: #1f2328; }
.crumb-slash { margin-left: 12px; color: #59636e; font-size: 15px; }
.crumb-repo { margin-left: 11px; font-weight: 500; }
.gh-actions { margin-left: auto; display: flex; align-items: center; gap: 8px; }
.gh-search { width: 260px; height: 32px; border: 1px solid #d1d9e0; border-radius: 6px; display: flex; align-items: center; padding-left: 8px; color: #59636e; letter-spacing: -0.15px; }
.gh-search .oct { margin-right: 7px; }
.slash-key { width: 16px; height: 18px; margin: 0 4px 0 3px; border: 1px solid #818b98; border-radius: 3px; display: flex; align-items: center; justify-content: center; font-size: 12px; }
.btn-group { display: flex; height: 32px; border: 1px solid #d1d9e0; border-radius: 6px; flex: none; }
.seg { display: flex; align-items: center; justify-content: center; }
.seg + .seg { border-left: 1px solid #d1d9e0; }
.copilot { width: 56px; }
.seg-copilot { width: 32px; }
.seg-caret { width: 22px; }
.vsep { width: 1px; height: 20px; background: #d1d9e0; margin: 0 4px; }
.plus-btn { width: 58px; gap: 7px; padding-left: 1px; }
.avatar-btn { width: 33px; height: 33px; margin: -2px 0 0 1px; padding: 2px 0 0 2px; border-radius: 50%; border: 1px solid #d1d9e0; background: #fff; overflow: hidden; flex: none; }
.broken { width: 16px; height: 16px; display: block; }
.br-page { fill: #fff; stroke: #8a8f96; stroke-width: 1; }
.br-sky { fill: #bcd0f2; }
.br-hill { fill: #4c9a3f; }

.tabs { display: flex; gap: 9.5px; padding: 13px 0 0 4px; }
.tab { height: 42px; padding: 0 8px 4px; display: flex; align-items: center; gap: 8px; color: #1f2328; white-space: nowrap; letter-spacing: -0.2px; }
.tab-issues { letter-spacing: -0.6px; }
.tab-active { font-weight: 500; position: relative; letter-spacing: 0; }
.tab-active::after { content: ""; position: absolute; left: 0; right: 0; bottom: 0; height: 2px; background: #fd8c73; }

/* repo layout */
.repo { flex: 1; display: flex; min-height: 0; }
.side { width: 309px; flex: none; border-right: 1px solid #d1d9e0; padding: 16px 16px 0 4px; }
.side-head { display: flex; align-items: center; height: 32px; }
.side-toggle { width: 32px; height: 32px; background: #eff2f5; border-radius: 6px; display: flex; align-items: center; justify-content: center; }
.side-title { margin-left: 8px; font-size: 16px; font-weight: 500; }
.branch-row { display: flex; gap: 8px; margin-top: 16px; }
.branch { width: 216px; justify-content: flex-start; padding-left: 13px; }
.branch-name { margin-left: 7px; font-weight: 500; }
.branch-caret { margin-left: auto; margin-right: 11px; }
.side-tools { background: #f6f8fa; width: 64px; }
.side-tools .seg { width: 32px; }
.go-file { height: 32px; margin-top: 8px; border: 1px solid #d1d9e0; border-radius: 6px; display: flex; align-items: center; padding: 0 5px 0 13px; }
.go-label { margin-left: 7px; color: #59636e; }
.t-key { margin-left: auto; width: 16px; height: 20px; border: 1px solid #d1d9e0; border-bottom-width: 2px; border-radius: 4px; display: flex; align-items: center; justify-content: center; font: 11px "DejaVu Sans Mono", monospace; color: #1f2328; }
.tree { margin: 12px 15px 0 0; }
.node { height: 32px; display: flex; align-items: center; border-radius: 6px; padding-left: 4px; color: #1f2328; gap: 8px; white-space: nowrap; }
.node-current { background: #eff2f5; }
.node-tight { letter-spacing: -0.15px; }
.depth-2 { padding-left: 12px; }
.chev { width: 12px; height: 12px; margin: 0 2px 0 -2px; }
.chev-gap { width: 12px; flex: none; }
.dir { fill: #54aeff; }

/* main */
.content { flex: 1; min-width: 0; padding: 16px 17px 0 16px; }
.path-row { display: flex; align-items: center; height: 32px; gap: 8px; }
.path { display: flex; align-items: center; font-size: 16px; }
.path-link { color: #0969da; font-weight: 500; }
.path-cur { font-weight: 500; letter-spacing: 0.1px; }
.path-sep { margin: 0 3.5px; color: #59636e; }
.path-copy { margin-left: 6px; margin-right: auto; }
.add-file { width: 96px; gap: 8px; font-weight: 500; padding-left: 3px; letter-spacing: 0.2px; }
.commit { margin-top: 16px; height: 46px; border: 1px solid #d1d9e0; border-radius: 6px; display: flex; align-items: center; padding: 1px 16px 0 12px; }
.commit-avatar { width: 22px; height: 22px; border-radius: 50%; border: 1px solid #d1d9e0; flex: none; }
.commit-author { margin-left: 7px; font-weight: 500; letter-spacing: 0.3px; }
.commit-msg { margin-left: 8px; color: #59636e; letter-spacing: -0.04px; }
.commit-meta { margin-left: auto; font-size: 12px; color: #59636e; letter-spacing: -0.08px; }
.history { margin-left: 17px; display: flex; align-items: center; gap: 5px; font-size: 12px; font-weight: 500; letter-spacing: 0.15px; }
.files { margin-top: 16px; border: 1px solid #d1d9e0; border-radius: 6px; overflow: hidden; }
.row { height: 40.67px; padding: 1px 16px 0; border-top: 1px solid #d1d9e0; display: flex; align-items: center; }
.row .oct { margin-top: -2px; }
.row-head { height: 40px; border-top: 0; background: #f6f8fa; font-size: 12px; font-weight: 500; color: #59636e; letter-spacing: -0.1px; }
.row-head .c-date { letter-spacing: 0.03px; }
.c-name { width: 398px; flex: none; display: flex; align-items: center; gap: 10px; color: #1f2328; }
.row-head .c-name { color: #59636e; }
.dots { letter-spacing: 2.5px; }
.c-msg { color: #59636e; letter-spacing: -0.04px; }
.c-date { margin-left: auto; color: #59636e; }

/* tray flyout */
.tray { position: absolute; left: 1069px; top: 562px; width: 120px; height: 112px; background: #555; border: 1px solid #8f8f8f; border-bottom: 0; display: grid; grid-template-columns: repeat(3, 1fr); grid-auto-rows: 40px; }
.tray-cell { display: flex; align-items: center; justify-content: center; }
.tray-hover { background: #6e6e6e; }
.tray-ic { width: 18px; height: 18px; }
.tray-line { fill: none; stroke: #fff; stroke-width: 1.2; }
.t-red { fill: #c0523a; }
.t-orange { fill: #d08a3c; }
.t-green { fill: #6f9a7a; }
.t-blue { fill: #5a83a8; }
.t-white { fill: #fff; }
.t-dark { fill: #333; }
.t-amber { fill: #f5b800; }
.t-cloud { fill: #b8b8b8; }
.t-strike { fill: none; stroke: #eee; stroke-width: 1.1; }
.t-strike-shadow { fill: none; stroke: #555; stroke-width: 1.4; }
.t-bt { fill: #0a78f0; }
.t-btline { fill: none; stroke: #fff; stroke-width: 1.2; }
.t-screen { fill: #6e6e6e; stroke: #111; stroke-width: 1.2; }
.t-foot { fill: #555; stroke: #e8e8e8; stroke-width: 1; }
.t-mon { fill: #0a0f2e; }
.t-monb { fill: #6aa0e0; }
.t-monf { stroke: #222; stroke-width: 2; }
.t-cloudline { fill: none; stroke: #2a7fe0; stroke-width: 1.5; }
```
